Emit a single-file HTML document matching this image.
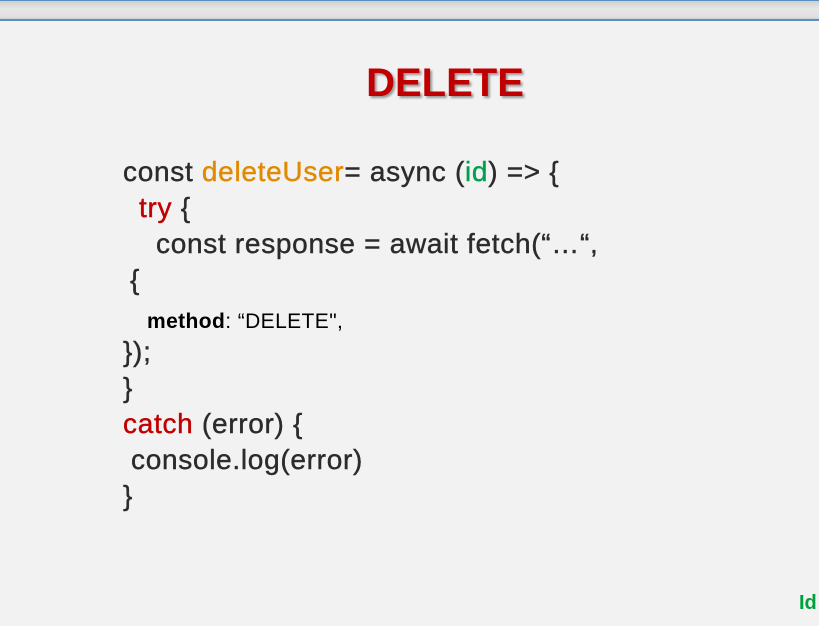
<!DOCTYPE html>
<html><head><style>
body{margin:0;width:819px;height:626px;background:#f2f2f2;position:relative;overflow:hidden;font-family:"Liberation Sans",sans-serif}
.bar{position:absolute;left:0;top:0;width:819px;height:21px;border-top:1px solid #5b8fbf;border-bottom:2px solid #5b8fbf;box-sizing:border-box;background:linear-gradient(#cfcfcf,#e6e6e6 40%,#e2e2e2 85%,#cfcfcf)}
.t{position:absolute;left:0;width:890px;text-align:center;top:61px;font-size:40px;font-weight:bold;color:#c00000;text-shadow:2px 2px 2px #999}
.l{position:absolute;font-size:28px;color:#2b2b2b;white-space:pre;line-height:30px;letter-spacing:0.7px;-webkit-text-stroke:0.4px #2b2b2b}
.o{color:#e08a00;-webkit-text-stroke-color:#e08a00}.g{color:#00a050;-webkit-text-stroke-color:#00a050}.r{color:#c00000;-webkit-text-stroke-color:#c00000}
.id{position:absolute;left:799px;top:592px;color:#00a040;font-weight:bold;font-size:20px}
</style></head><body>
<div class="bar"></div>
<div class="t">DELETE</div>
<div class="l" style="left:123px;top:157px">const <span class="o">deleteUser</span>= async (<span class="g">id</span>) =&gt; {</div>
<div class="l" style="left:139px;top:193px"><span class="r">try</span> {</div>
<div class="l" style="left:156px;top:229px">const response = await fetch(“…“,</div>
<div class="l" style="left:130px;top:265px">{</div>
<div class="l" style="left:147px;top:307px;font-size:21px;color:#000;letter-spacing:0.4px;-webkit-text-stroke:0"><b>method</b>: “DELETE",</div>
<div class="l" style="left:123px;top:337px">});</div>
<div class="l" style="left:123px;top:373px">}</div>
<div class="l" style="left:123px;top:409px"><span class="r">catch</span> (error) {</div>
<div class="l" style="left:131px;top:445px">console.log(error)</div>
<div class="l" style="left:123px;top:481px">}</div>
<div class="id">Id</div>
</body></html>
